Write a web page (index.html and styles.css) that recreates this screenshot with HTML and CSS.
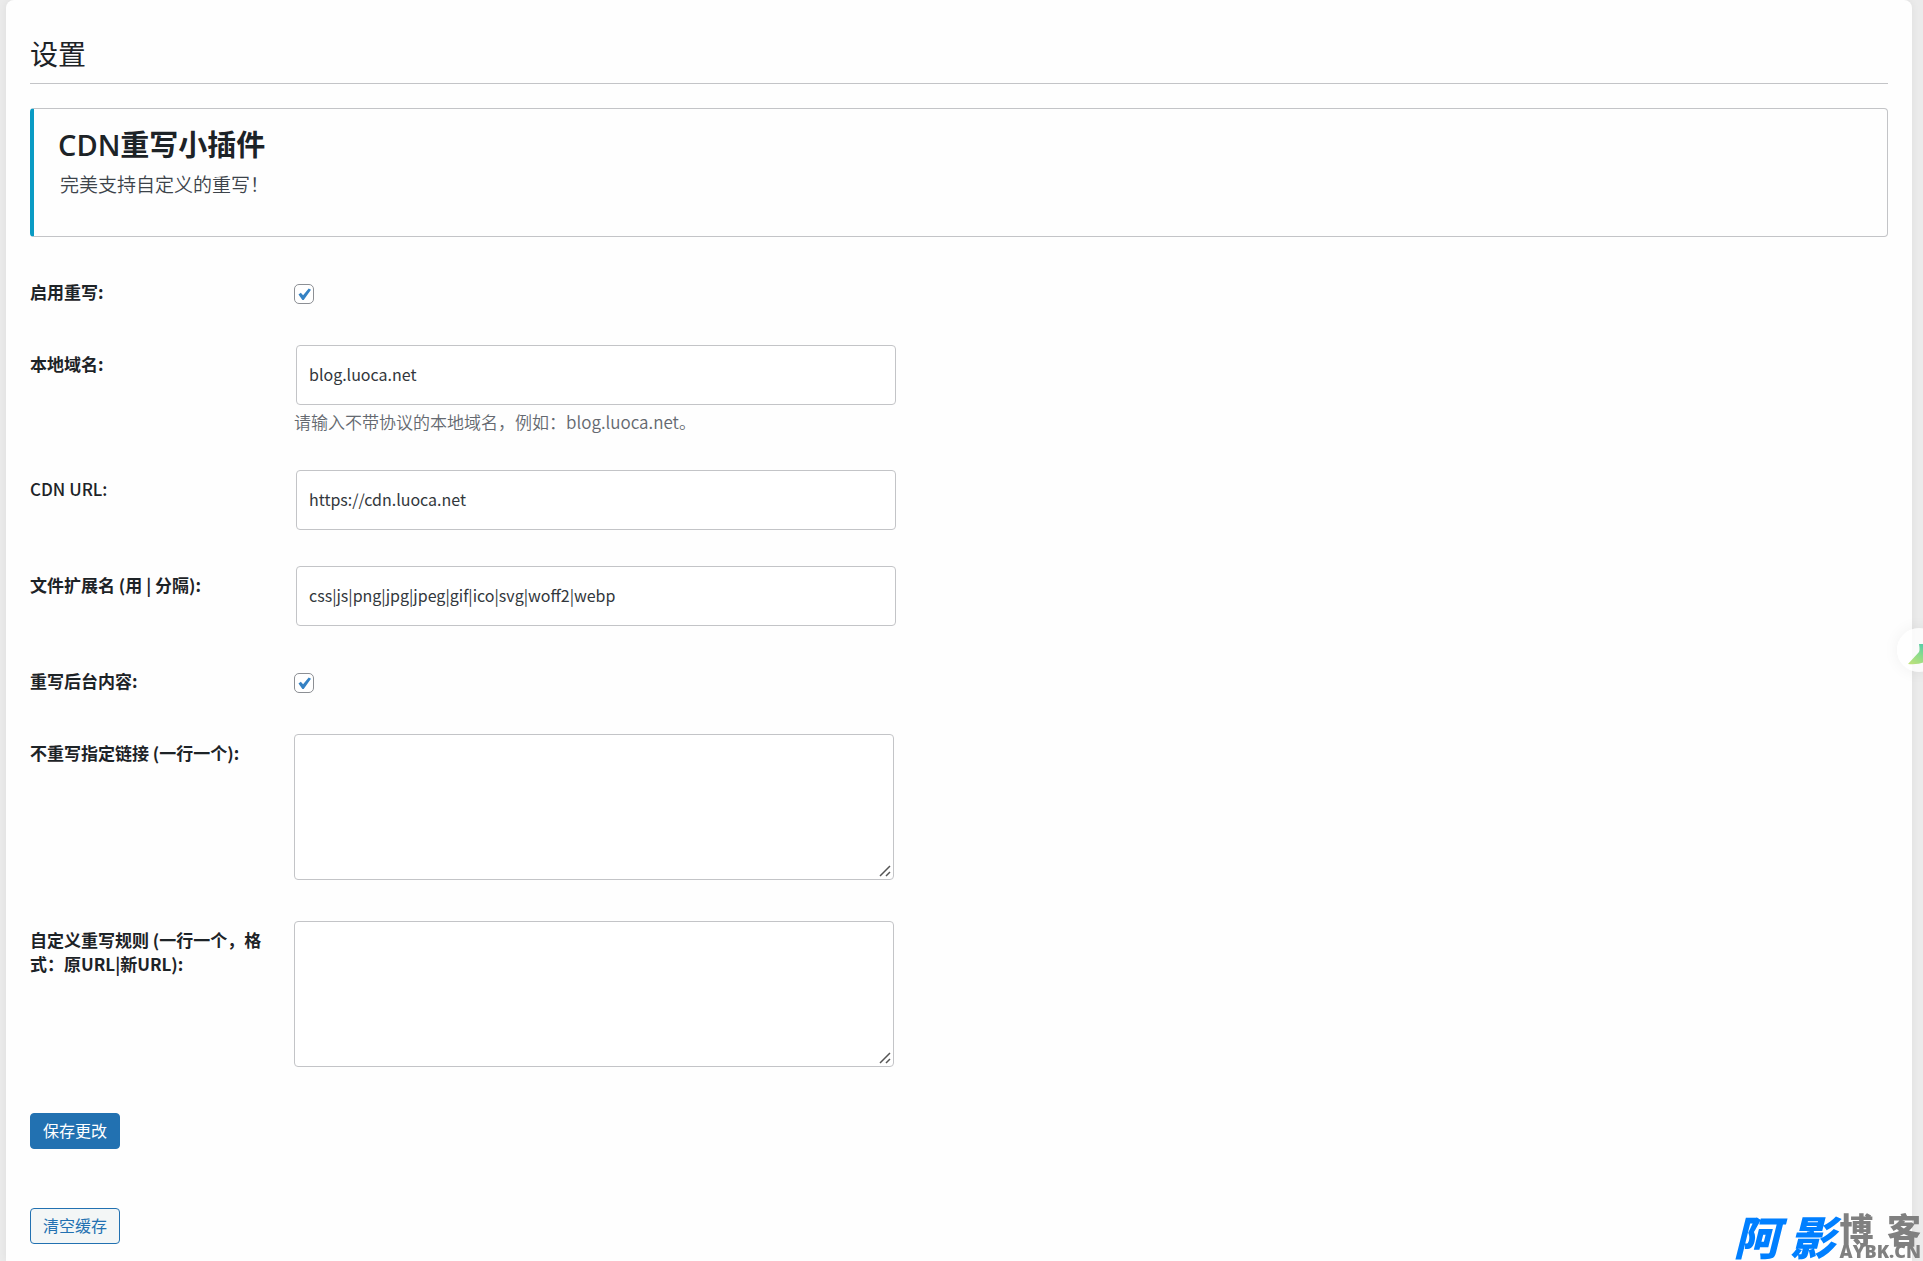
FILE: index.html
```html
<!DOCTYPE html>
<html lang="zh-CN">
<head>
  <meta charset="UTF-8" />
  <title>设置</title>
  <meta name="viewport" content="width=device-width, initial-scale=1.0" />
  <link rel="stylesheet" href="styles.css">
</head>
<body>

<main class="wrap">
  <h1 class="page-title">设置</h1>

  <div class="intro">
    <h2>CDN重写小插件</h2>
    <p>完美支持自定义的重写！</p>
  </div>

  <form onsubmit="return false">
    <table class="form-table">
      <tr>
        <th scope="row"><label for="enabled">启用重写:</label></th>
        <td><input type="checkbox" id="enabled" checked></td>
      </tr>
      <tr>
        <th scope="row"><label for="domain">本地域名:</label></th>
        <td>
          <input type="text" id="domain" value="blog.luoca.net">
          <p class="description">请输入不带协议的本地域名，例如：blog.luoca.net。</p>
        </td>
      </tr>
      <tr>
        <th scope="row"><label for="cdn" class="latin">CDN URL:</label></th>
        <td><input type="text" id="cdn" value="https://cdn.luoca.net"></td>
      </tr>
      <tr>
        <th scope="row"><label for="ext">文件扩展名 (用 | 分隔):</label></th>
        <td><input type="text" id="ext" value="css|js|png|jpg|jpeg|gif|ico|svg|woff2|webp"></td>
      </tr>
      <tr>
        <th scope="row"><label for="admin">重写后台内容:</label></th>
        <td><input type="checkbox" id="admin" checked></td>
      </tr>
      <tr>
        <th scope="row"><label for="exclude">不重写指定链接 (一行一个):</label></th>
        <td><textarea id="exclude"></textarea></td>
      </tr>
      <tr>
        <th scope="row"><label for="rules">自定义重写规则 (一行一个，格式：原URL|新URL):</label></th>
        <td><textarea id="rules"></textarea></td>
      </tr>
    </table>
    <div class="actions">
      <button type="submit" class="button primary">保存更改</button>
      <button type="button" class="button">清空缓存</button>
    </div>
  </form>
</main>

<button class="float-btn" aria-label="助手">
  <svg width="30" height="30" viewBox="0 0 30 30">
    <defs>
      <linearGradient id="leaf" x1="0" y1="1" x2="0.7" y2="0">
        <stop offset="0" stop-color="#c3e27a" />
        <stop offset="0.5" stop-color="#8fdc8a" />
        <stop offset="1" stop-color="#4fcbab" />
      </linearGradient>
    </defs>
    <path d="M3 26 L14 14 Q15 12 14 6 L20 6 L28 18 L20 24 Q12 27 3 26Z" fill="url(#leaf)" />
  </svg>
</button>

<div class="brand">
  <span class="brand-name"><span>阿</span><span>影</span></span>
  <span class="brand-sub">
    <span class="brand-blog"><span>博</span><span>客</span></span>
    <span class="brand-url">AYBK.CN</span>
  </span>
</div>

</body>
</html>
```
FILE: styles.css
```css
* { box-sizing: border-box; }
body { margin: 0; background: #ebebeb; color: #3c434a; font-family: "Noto Sans CJK SC", sans-serif; font-size: 17px; line-height: 24px; overflow: hidden; }
.wrap { min-height: 100vh; margin: 0 11px 0 6px; padding: 32px 24px 16px; background: #fefefe; border-radius: 8px 8px 0 0; box-shadow: 0 0 8px rgba(0,0,0,0.06); }

.page-title { margin: 0 0 24px; padding-bottom: 8px; border-bottom: 1px solid #c3c4c7; color: #1d2327; font-size: 28px; font-weight: 400; line-height: 43px; }
.intro { height: 129px; margin-bottom: 19px; padding: 16px 24px; border: 1px solid #c3c4c7; border-left: 4px solid #0a9bc4; border-radius: 4px; }
.intro h2 { margin: 0; color: #1d2327; font-family: "Open Sans", "Noto Sans CJK SC", sans-serif; font-size: 29px; font-weight: 600; line-height: 40px; }
.intro p { margin: 3px 2px 0; color: #3c434a; font-size: 19px; font-weight: 350; line-height: 32px; }

.form-table { width: 100%; border-collapse: collapse; }
.form-table th { width: 252px; padding: 24px 12px 24px 0; color: #1d2327; font-weight: 600; text-align: left; vertical-align: top; }
.form-table td { padding: 17px 12px 19px; vertical-align: top; }
.latin { font-weight: 500; }
input[type="text"] { display: block; width: 600px; max-width: 100%; height: 60px; margin: 0 2px; padding: 0 12px 2px; border: 1px solid #c3c4c7; border-radius: 4px; background: #fff; color: #32373c; font: inherit; font-size: 16px; }
input[type="checkbox"] { display: block; appearance: none; width: 20px; height: 20px; margin: 11px 0 0; border: 1px solid #8c8f94; border-radius: 5px; background: #fff; }
input[type="checkbox"]:checked { background: #fff url("data:image/svg+xml,%3Csvg xmlns='http://www.w3.org/2000/svg' viewBox='0 0 18 18'%3E%3Cpath d='M3.5 9.5l2.3-1.8 2.3 2.6 5.6-6.8 2.3 1.2-7.3 10.4H7.4z' fill='%233582c4'/%3E%3C/svg%3E") center / 18px no-repeat; }
textarea { display: block; width: 600px; max-width: 100%; height: 146px; margin-bottom: 5px; padding: 4px 8px; border: 1px solid #c3c4c7; border-radius: 4px; background: #fff; font: inherit; resize: vertical; }
textarea::-webkit-resizer { background: url("data:image/svg+xml,%3Csvg xmlns='http://www.w3.org/2000/svg' viewBox='0 0 15 15'%3E%3Cpath d='M2 12L12 2M8 12l4-4' stroke='%23555' stroke-width='1.5'/%3E%3C/svg%3E") center / 15px no-repeat; }
.description { margin: 5px 0 0; color: #646970; font-weight: 350; }

.actions { display: flex; flex-direction: column; align-items: flex-start; gap: 59px; margin-top: 22px; }
.button { height: 36px; padding: 0 12px 2px; border: 1px solid #2271b1; border-radius: 4px; background: #f3f6f6; color: #2271b1; font-family: inherit; font-size: 16px; cursor: pointer; }
.button.primary { background: #2271b1; color: #fff; }

.float-btn { position: fixed; top: 628px; right: -18px; width: 44px; height: 44px; padding: 6px 0 0 8px; border: none; border-radius: 50%; background: rgba(255,255,255,0.8); box-shadow: 0 0 16px rgba(0,0,0,0.06); text-align: left; }
.float-btn svg { display: block; }

.brand { position: fixed; right: 2px; bottom: 1px; display: flex; gap: 4px; font-weight: 900; }
.brand-name { display: flex; gap: 10px; color: #007fff; font-size: 46px; font-style: italic; line-height: 40px; }
.brand-sub { display: flex; flex-direction: column; color: #808080; }
.brand-blog { display: flex; justify-content: space-between; font-size: 34px; line-height: 27px; }
.brand-url { font-family: "Open Sans", sans-serif; font-size: 18px; font-weight: 800; line-height: 18px; }
```
